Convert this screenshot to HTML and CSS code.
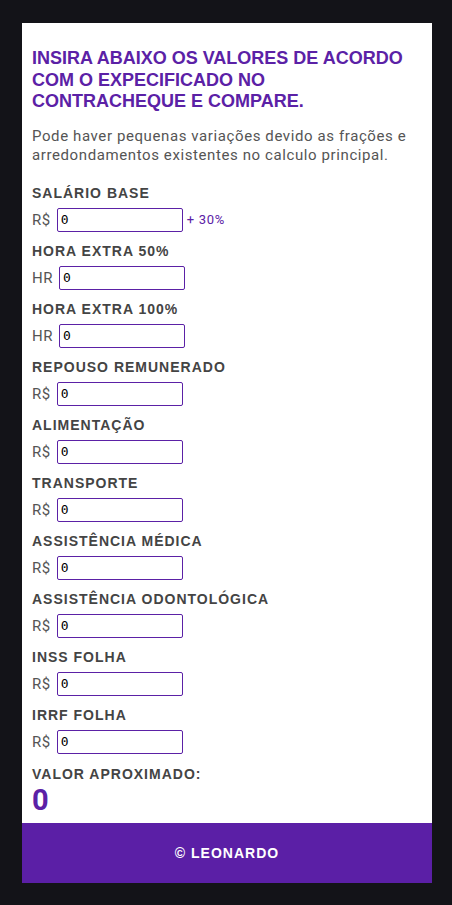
FILE: index.html
```html
<!DOCTYPE html>
<html lang="pt-BR">
<head>
<meta charset="utf-8">
<title>Contracheque</title>
<link rel="stylesheet" href="styles.css">
</head>
<body>
<div class="page">
  <main class="card">
    <h1 class="title">INSIRA ABAIXO OS VALORES DE ACORDO COM O EXPECIFICADO NO CONTRACHEQUE E COMPARE.</h1>
    <p class="note">Pode haver pequenas variações devido as frações e arredondamentos existentes no calculo principal.</p>

    <div class="field">
      <label class="label">SALÁRIO BASE</label>
      <div class="row"><span class="unit">R$</span><input class="input" type="text" value="0"><span class="extra">+ 30%</span></div>
    </div>
    <div class="field">
      <label class="label">HORA EXTRA 50%</label>
      <div class="row"><span class="unit">HR</span><input class="input" type="text" value="0"></div>
    </div>
    <div class="field">
      <label class="label">HORA EXTRA 100%</label>
      <div class="row"><span class="unit">HR</span><input class="input" type="text" value="0"></div>
    </div>
    <div class="field">
      <label class="label">REPOUSO REMUNERADO</label>
      <div class="row"><span class="unit">R$</span><input class="input" type="text" value="0"></div>
    </div>
    <div class="field">
      <label class="label">ALIMENTAÇÃO</label>
      <div class="row"><span class="unit">R$</span><input class="input" type="text" value="0"></div>
    </div>
    <div class="field">
      <label class="label">TRANSPORTE</label>
      <div class="row"><span class="unit">R$</span><input class="input" type="text" value="0"></div>
    </div>
    <div class="field">
      <label class="label">ASSISTÊNCIA MÉDICA</label>
      <div class="row"><span class="unit">R$</span><input class="input" type="text" value="0"></div>
    </div>
    <div class="field">
      <label class="label">ASSISTÊNCIA ODONTOLÓGICA</label>
      <div class="row"><span class="unit">R$</span><input class="input" type="text" value="0"></div>
    </div>
    <div class="field">
      <label class="label">INSS FOLHA</label>
      <div class="row"><span class="unit">R$</span><input class="input" type="text" value="0"></div>
    </div>
    <div class="field">
      <label class="label">IRRF FOLHA</label>
      <div class="row"><span class="unit">R$</span><input class="input" type="text" value="0"></div>
    </div>

    <div class="result">
      <div class="label">VALOR APROXIMADO:</div>
      <div class="total">0</div>
    </div>
  </main>
  <footer class="footer">© LEONARDO</footer>
</div>
</body>
</html>
```
FILE: styles.css
```css
html, body {
  margin: 0;
  padding: 0;
  background: #131318;
  height: 100%;
}
body {
  font-family: "Liberation Sans", Arial, sans-serif;
}
.page {
  margin: 23px 20px 0 22px;
}
.card {
  background: #ffffff;
  padding: 25px 10px 8px 10px;
}
.title {
  margin: 0;
  color: #5b21a6;
  font-family: "Liberation Sans", Arial, sans-serif;
  font-weight: bold;
  font-size: 18px;
  line-height: 21.5px;
}
.note {
  margin: 14px 0 0 0;
  color: #555555;
  font-family: Roboto, "Noto Sans", sans-serif;
  font-size: 15px;
  letter-spacing: 0.6px;
  line-height: 19px;
}
.field {
  margin-top: 19px;
}
.field + .field {
  margin-top: 10px;
}
.label {
  display: block;
  color: #444444;
  font-family: "Liberation Sans", Arial, sans-serif;
  font-weight: bold;
  font-size: 14px;
  letter-spacing: 1px;
  line-height: 18px;
}
.row {
  display: flex;
  align-items: center;
  margin-top: 6px;
  height: 24px;
}
.unit {
  color: #555555;
  font-family: Roboto, "Noto Sans", sans-serif;
  font-size: 15px;
  letter-spacing: 0.5px;
  margin-right: 6px;
}
.input {
  box-sizing: border-box;
  width: 126px;
  height: 24px;
  margin: 0;
  padding: 0 3px;
  border: 1px solid #5b21a6;
  border-radius: 2px;
  font-family: "DejaVu Sans Mono", monospace;
  font-size: 13px;
  color: #000;
  background: #fff;
  outline: none;
}
.extra {
  margin-left: 4px;
  color: #5b21a6;
  font-family: Roboto, "Noto Sans", sans-serif;
  font-size: 13px;
  letter-spacing: 0.7px;
}
.result {
  margin-top: 11px;
}
.total {
  margin-top: 2px;
  color: #5b21a6;
  font-family: Roboto, "Noto Sans", sans-serif;
  font-weight: bold;
  font-size: 29px;
  line-height: 30px;
}
.footer {
  height: 60px;
  background: #5b1fa6;
  color: #ffffff;
  display: flex;
  align-items: center;
  justify-content: center;
  font-family: "Liberation Sans", Arial, sans-serif;
  font-weight: bold;
  font-size: 14px;
  letter-spacing: 1px;
}
```
